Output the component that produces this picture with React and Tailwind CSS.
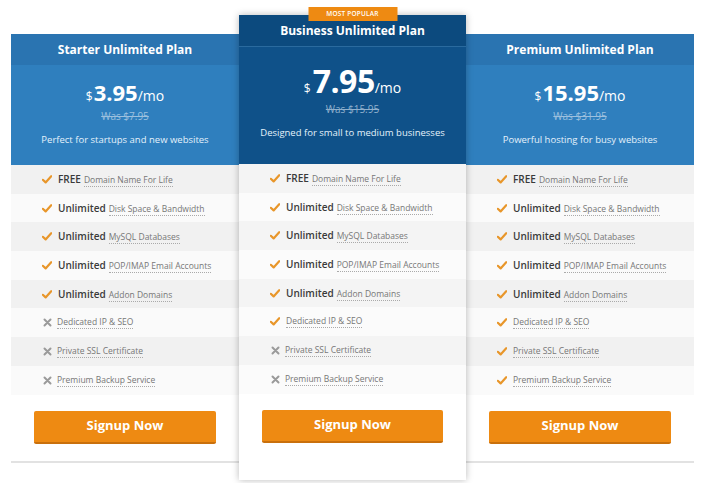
import React from "react";

const features = [
  ["FREE", "Domain Name For Life"],
  ["Unlimited", "Disk Space & Bandwidth"],
  ["Unlimited", "MySQL Databases"],
  ["Unlimited", "POP/IMAP Email Accounts"],
  ["Unlimited", "Addon Domains"],
  ["", "Dedicated IP & SEO"],
  ["", "Private SSL Certificate"],
  ["", "Premium Backup Service"],
];

function Check() {
  return (
    <svg width="10" height="9" viewBox="0 0 10 9" className="shrink-0">
      <path d="M0.8 4.8 L3.6 7.4 L9.2 1.2" fill="none" stroke="#e8962a" strokeWidth="2.2" strokeLinecap="round" strokeLinejoin="round" />
    </svg>
  );
}

function Cross() {
  return (
    <svg width="9" height="9" viewBox="0 0 9 9" className="shrink-0">
      <path d="M1.5 1.5 L7.5 7.5 M7.5 1.5 L1.5 7.5" fill="none" stroke="#9a9a9a" strokeWidth="2" strokeLinecap="round" />
    </svg>
  );
}

function Feature({ bold, text, ok, odd, featured }) {
  const bg = featured
    ? odd ? "bg-[#f4f4f4]" : "bg-[#fbfbfb]"
    : odd ? "bg-[#f1f1f1]" : "bg-[#fafafa]";
  return (
    <div className={`h-[28.7px] flex items-center pl-[31px] ${bg}`}>
      <div className="w-[10px] flex justify-center">{ok ? <Check /> : <Cross />}</div>
      <div className={`flex items-baseline ${ok ? "ml-[6px]" : "ml-[5px]"}`}>
        {bold && <span className="text-[10px] font-semibold text-[#3a3a3a] mr-[3px]">{bold}</span>}
        <span className="text-[8.5px] text-[#777] border-b border-dotted border-[#aaa] leading-[12px]">{text}</span>
      </div>
    </div>
  );
}

function Card({ title, price, was, desc, okCount, featured }) {
  return (
    <div
      className={
        featured
          ? "relative w-[227px] bg-white shadow-[0_0_7px_rgba(0,0,0,0.28)] z-10 pb-[37px]"
          : "w-[228px] mt-[19px] bg-white border-b-2 border-[#e2e2e2] pb-[17px]"
      }
    >
      {featured && (
        <div className="absolute left-1/2 -translate-x-1/2 top-[-8px] w-[89px] h-[14px] bg-[#ee8a12] text-white text-[6.5px] font-semibold flex items-center justify-center tracking-[0.2px]">
          MOST POPULAR
        </div>
      )}
      <div
        className={
          featured
            ? "h-[32px] bg-[#0c4a7e] border-b border-[#2a6a9e] flex items-center justify-center text-white font-bold text-[12px] pt-[1px]"
            : "h-[31px] bg-[#2a74b1] flex items-center justify-center text-white font-bold text-[12px] pt-[1px]"
        }
      >
        {title}
      </div>
      <div
        className={
          featured
            ? "h-[117px] bg-[#0f5189] flex flex-col items-center pt-[18px]"
            : "h-[100px] bg-[#2f7fbe] flex flex-col items-center pt-[16px]"
        }
      >
        <div className="flex items-baseline text-white leading-none">
          <span className={featured ? "text-[12px] mr-[2px]" : "text-[12px] mr-[1px]"}>$</span>
          <span className={featured ? "text-[32px] font-bold tracking-[-0.5px]" : "text-[22px] font-bold"}>{price}</span>
          <span className="text-[14px]">/mo</span>
        </div>
        <div className={`text-[10px] line-through ${featured ? "text-[#8fb0cc] mt-[5px]" : "text-[#9cc0de] mt-[6px]"}`}>
          {was}
        </div>
        <div className={`text-[9.5px] text-[#e4f1fb] ${featured ? "mt-[9px]" : "mt-[9px]"}`}>{desc}</div>
      </div>
      <div>
        {features.map((f, i) => (
          <Feature key={i} bold={f[0]} text={f[1]} ok={i < okCount} odd={i % 2 === 0} featured={featured} />
        ))}
      </div>
      <div className="px-[23px] mt-[16px]">
        <button className="w-full h-[33px] bg-[#ee8a12] border-b-2 border-[#c9700c] rounded-[2px] text-white font-bold text-[13px]">
          Signup Now
        </button>
      </div>
    </div>
  );
}

export default function App() {
  return (
    <div className="w-[707px] h-[483px] bg-white overflow-hidden" style={{ fontFamily: '"Open Sans", sans-serif' }}>
      <div className="flex items-start pl-[11px] pt-[15px]">
        <Card title="Starter Unlimited Plan" price="3.95" was="Was $7.95" desc="Perfect for startups and new websites" okCount={5} />
        <Card title="Business Unlimited Plan" price="7.95" was="Was $15.95" desc="Designed for small to medium businesses" okCount={6} featured />
        <Card title="Premium Unlimited Plan" price="15.95" was="Was $31.95" desc="Powerful hosting for busy websites" okCount={8} />
      </div>
    </div>
  );
}
